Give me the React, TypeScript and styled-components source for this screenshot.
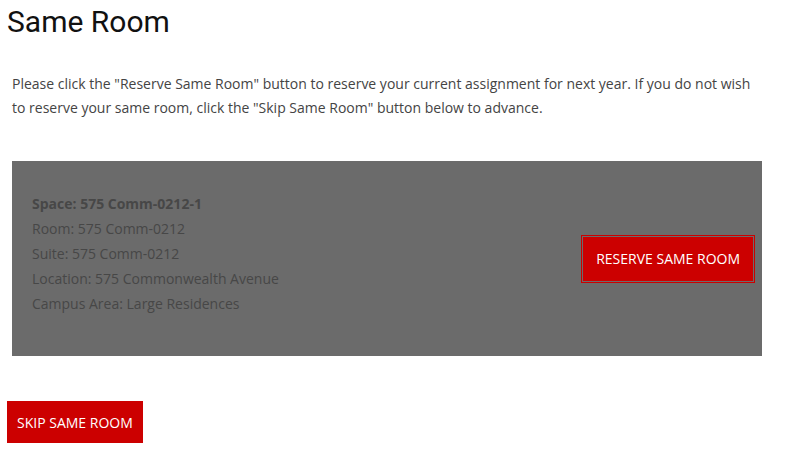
import React from 'react';
import styled, {createGlobalStyle} from 'styled-components';

const GlobalStyle = createGlobalStyle`
  body {
    margin: 0;
    background: #fff;
    font-family: "Open Sans", "Liberation Sans", sans-serif;
  }
`;

const Page = styled.div`
  padding: 0 0 0 7px;
  width: 755px;
`;

const Title = styled.h1`
  margin: 0;
  padding-top: 2px;
  font-family: Roboto, "Liberation Sans", sans-serif;
  font-weight: 400;
  font-size: 30px;
  line-height: 40px;
  color: #111;
`;

const Intro = styled.p`
  margin: 30px 0 0 5px;
  font-size: 14px;
  line-height: 24px;
  color: #444;
`;

const Panel = styled.div`
  display: flex;
  align-items: center;
  justify-content: space-between;
  margin: 41px 0 0 5px;
  height: 195px;
  box-sizing: border-box;
  padding: 0 8px 0 20px;
  background: #6b6b6b;
`;

const Details = styled.div`
  margin-top: -11px;
  font-size: 14px;
  line-height: 25px;
  color: #474747;

  div:first-child {
    font-weight: 700;
  }
`;

const RedButton = styled.button<{$outlined?: boolean}>`
  font-family: "Open Sans", "Liberation Sans", sans-serif;
  font-size: 14px;
  text-transform: uppercase;
  color: #fff;
  background: #cc0000;
  cursor: pointer;
  border: ${({$outlined}) => ($outlined ? '1px solid #6b6b6b' : 'none')};
  box-shadow: ${({$outlined}) => ($outlined ? '0 0 0 1px #cc0000' : 'none')};
  padding: ${({$outlined}) => ($outlined ? '0 13px' : '0 10px')};
  height: ${({$outlined}) => ($outlined ? '46px' : '42px')};
`;

const Footer = styled.div`
  margin-top: 45px;
`;

export default function App() {
  return (
    <Page>
      <GlobalStyle />
      <Title>Same Room</Title>
      <Intro>
        Please click the "Reserve Same Room" button to reserve your current assignment for next year. If you
        do not wish to reserve your same room, click the "Skip Same Room" button below to advance.
      </Intro>
      <Panel>
        <Details>
          <div>Space: 575 Comm-0212-1</div>
          <div>Room: 575 Comm-0212</div>
          <div>Suite: 575 Comm-0212</div>
          <div>Location: 575 Commonwealth Avenue</div>
          <div>Campus Area: Large Residences</div>
        </Details>
        <RedButton $outlined>Reserve Same Room</RedButton>
      </Panel>
      <Footer>
        <RedButton>Skip Same Room</RedButton>
      </Footer>
    </Page>
  );
}
